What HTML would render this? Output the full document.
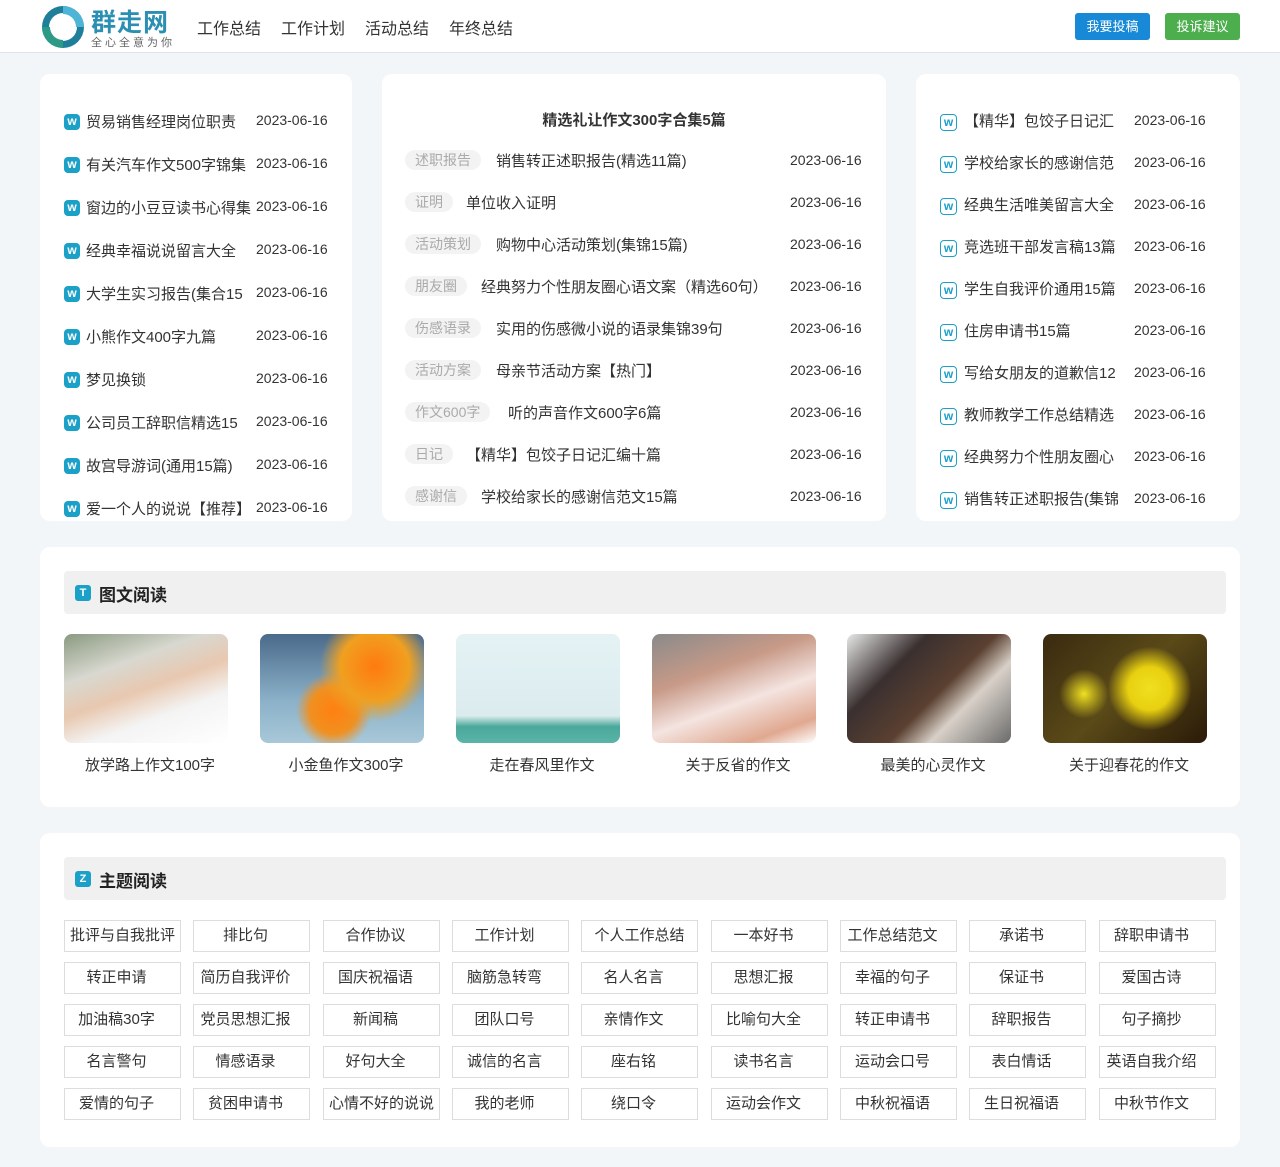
<!DOCTYPE html>
<html><head><meta charset="utf-8"><style>
*{margin:0;padding:0;box-sizing:border-box}
body{width:1280px;height:1167px;background:#f3f6f8;font-family:"Liberation Sans","Noto Sans CJK SC",sans-serif;color:#333;position:relative;overflow:hidden;font-size:14px}
.a{position:absolute;white-space:nowrap}
.hdr{position:absolute;left:0;top:0;width:1280px;height:53px;background:#fff;border-bottom:1px solid #dde3e8}
.card{position:absolute;background:#fff;border-radius:10px}
.wi{position:absolute;width:16px;height:16px;border-radius:4px;background:#1ba0c8;color:#fff;font-size:12px;font-weight:bold;line-height:15px;text-align:center}
.wo{position:absolute;width:17px;height:17px;border-radius:4px;border:1.5px solid #1ba0c8;color:#1ba0c8;font-size:12px;font-weight:bold;line-height:14px;text-align:center}
.d{color:#333;font-size:14px}
.tag{position:absolute;height:20px;line-height:20px;padding:0 10px;background:#f3f3f3;border-radius:10px;color:#aaa;font-size:14px}
.bar{position:absolute;left:64px;width:1162px;height:43px;background:#f0f0f0;border-radius:4px}
.bi{position:absolute;left:11px;top:14px;width:16px;height:16px;background:#1ba0c8;border-radius:3px;color:#fff;font-size:11px;font-weight:bold;line-height:16px;text-align:center}
.bt{position:absolute;left:35px;top:10px;font-size:17px;font-weight:bold;color:#222}
.img{position:absolute;top:634px;width:164px;height:109px;border-radius:8px;overflow:hidden}
.cap{position:absolute;top:754px;width:196px;text-align:center;font-size:15px;color:#333}
.t{position:absolute;width:117px;height:32px;border:1px solid #ddd;line-height:30px;text-align:center;font-size:15px;color:#333;white-space:nowrap;overflow:hidden;padding-right:12px}
</style></head><body>
<div class="hdr">
 <svg class="a" style="left:40px;top:4px" width="46" height="46" viewBox="0 0 46 46"><circle cx="23" cy="23" r="21" fill="#1f7f9a"/><circle cx="23" cy="23" r="14" fill="#fff"/><path d="M23 2 A21 21 0 0 1 44 23 L36 23 A13 13 0 0 0 23 10Z" fill="#4fb5d6"/><path d="M2 23 A21 21 0 0 0 23 44 L23 36 A13 13 0 0 1 10 23Z" fill="#2d9a86"/><circle cx="23" cy="23" r="9" fill="#fff"/></svg>
 <div class="a" style="left:91px;top:3px;font-size:25px;color:#2a8fb3;font-weight:bold;letter-spacing:1px">群走网</div>
 <div class="a" style="left:91px;top:34px;font-size:11px;color:#666;letter-spacing:3px">全心全意为你</div>
 <div class="a" style="left:197px;top:15px;font-size:16px;color:#333">工作总结</div>
 <div class="a" style="left:281px;top:15px;font-size:16px;color:#333">工作计划</div>
 <div class="a" style="left:365px;top:15px;font-size:16px;color:#333">活动总结</div>
 <div class="a" style="left:449px;top:15px;font-size:16px;color:#333">年终总结</div>
 <div class="a" style="left:1075px;top:13px;width:75px;height:27px;background:#1789d6;border-radius:3px;color:#fff;font-size:13px;line-height:27px;text-align:center">我要投稿</div>
 <div class="a" style="left:1165px;top:13px;width:75px;height:27px;background:#4cae4c;border-radius:3px;color:#fff;font-size:13px;line-height:27px;text-align:center">投诉建议</div>
</div>

<div class="card" style="left:40px;top:74px;width:312px;height:447px;overflow:hidden">
 <div class="wi" style="left:24px;top:40px">w</div><div class="a" style="left:46px;top:37px;font-size:15px">贸易销售经理岗位职责</div><div class="a d" style="left:216px;top:38px">2023-06-16</div>
 <div class="wi" style="left:24px;top:83px">w</div><div class="a" style="left:46px;top:80px;font-size:15px">有关汽车作文500字锦集</div><div class="a d" style="left:216px;top:81px">2023-06-16</div>
 <div class="wi" style="left:24px;top:126px">w</div><div class="a" style="left:46px;top:123px;font-size:15px">窗边的小豆豆读书心得集</div><div class="a d" style="left:216px;top:124px">2023-06-16</div>
 <div class="wi" style="left:24px;top:169px">w</div><div class="a" style="left:46px;top:166px;font-size:15px">经典幸福说说留言大全</div><div class="a d" style="left:216px;top:167px">2023-06-16</div>
 <div class="wi" style="left:24px;top:212px">w</div><div class="a" style="left:46px;top:209px;font-size:15px">大学生实习报告(集合15</div><div class="a d" style="left:216px;top:210px">2023-06-16</div>
 <div class="wi" style="left:24px;top:255px">w</div><div class="a" style="left:46px;top:252px;font-size:15px">小熊作文400字九篇</div><div class="a d" style="left:216px;top:253px">2023-06-16</div>
 <div class="wi" style="left:24px;top:298px">w</div><div class="a" style="left:46px;top:295px;font-size:15px">梦见换锁</div><div class="a d" style="left:216px;top:296px">2023-06-16</div>
 <div class="wi" style="left:24px;top:341px">w</div><div class="a" style="left:46px;top:338px;font-size:15px">公司员工辞职信精选15</div><div class="a d" style="left:216px;top:339px">2023-06-16</div>
 <div class="wi" style="left:24px;top:384px">w</div><div class="a" style="left:46px;top:381px;font-size:15px">故宫导游词(通用15篇)</div><div class="a d" style="left:216px;top:382px">2023-06-16</div>
 <div class="wi" style="left:24px;top:427px">w</div><div class="a" style="left:46px;top:424px;font-size:15px">爱一个人的说说【推荐】</div><div class="a d" style="left:216px;top:425px">2023-06-16</div>
</div>

<div class="card" style="left:382px;top:74px;width:504px;height:447px">
 <div class="a" style="left:0;width:504px;text-align:center;top:35px;font-size:15px;font-weight:bold">精选礼让作文300字合集5篇</div>
 <div class="tag" style="left:23px;top:76px">述职报告</div><div class="a" style="left:114px;top:76px;font-size:15px">销售转正述职报告(精选11篇)</div><div class="a d" style="left:408px;top:78px">2023-06-16</div>
 <div class="tag" style="left:23px;top:118px">证明</div><div class="a" style="left:84px;top:118px;font-size:15px">单位收入证明</div><div class="a d" style="left:408px;top:120px">2023-06-16</div>
 <div class="tag" style="left:23px;top:160px">活动策划</div><div class="a" style="left:114px;top:160px;font-size:15px">购物中心活动策划(集锦15篇)</div><div class="a d" style="left:408px;top:162px">2023-06-16</div>
 <div class="tag" style="left:23px;top:202px">朋友圈</div><div class="a" style="left:99px;top:202px;font-size:15px">经典努力个性朋友圈心语文案（精选60句）</div><div class="a d" style="left:408px;top:204px">2023-06-16</div>
 <div class="tag" style="left:23px;top:244px">伤感语录</div><div class="a" style="left:114px;top:244px;font-size:15px">实用的伤感微小说的语录集锦39句</div><div class="a d" style="left:408px;top:246px">2023-06-16</div>
 <div class="tag" style="left:23px;top:286px">活动方案</div><div class="a" style="left:114px;top:286px;font-size:15px">母亲节活动方案【热门】</div><div class="a d" style="left:408px;top:288px">2023-06-16</div>
 <div class="tag" style="left:23px;top:328px">作文600字</div><div class="a" style="left:126px;top:328px;font-size:15px">听的声音作文600字6篇</div><div class="a d" style="left:408px;top:330px">2023-06-16</div>
 <div class="tag" style="left:23px;top:370px">日记</div><div class="a" style="left:84px;top:370px;font-size:15px">【精华】包饺子日记汇编十篇</div><div class="a d" style="left:408px;top:372px">2023-06-16</div>
 <div class="tag" style="left:23px;top:412px">感谢信</div><div class="a" style="left:99px;top:412px;font-size:15px">学校给家长的感谢信范文15篇</div><div class="a d" style="left:408px;top:414px">2023-06-16</div>
</div>

<div class="card" style="left:916px;top:74px;width:324px;height:447px">
 <div class="wo" style="left:24px;top:40px">w</div><div class="a" style="left:48px;top:36px;font-size:15px">【精华】包饺子日记汇</div><div class="a d" style="left:218px;top:38px">2023-06-16</div>
 <div class="wo" style="left:24px;top:82px">w</div><div class="a" style="left:48px;top:78px;font-size:15px">学校给家长的感谢信范</div><div class="a d" style="left:218px;top:80px">2023-06-16</div>
 <div class="wo" style="left:24px;top:124px">w</div><div class="a" style="left:48px;top:120px;font-size:15px">经典生活唯美留言大全</div><div class="a d" style="left:218px;top:122px">2023-06-16</div>
 <div class="wo" style="left:24px;top:166px">w</div><div class="a" style="left:48px;top:162px;font-size:15px">竞选班干部发言稿13篇</div><div class="a d" style="left:218px;top:164px">2023-06-16</div>
 <div class="wo" style="left:24px;top:208px">w</div><div class="a" style="left:48px;top:204px;font-size:15px">学生自我评价通用15篇</div><div class="a d" style="left:218px;top:206px">2023-06-16</div>
 <div class="wo" style="left:24px;top:250px">w</div><div class="a" style="left:48px;top:246px;font-size:15px">住房申请书15篇</div><div class="a d" style="left:218px;top:248px">2023-06-16</div>
 <div class="wo" style="left:24px;top:292px">w</div><div class="a" style="left:48px;top:288px;font-size:15px">写给女朋友的道歉信12</div><div class="a d" style="left:218px;top:290px">2023-06-16</div>
 <div class="wo" style="left:24px;top:334px">w</div><div class="a" style="left:48px;top:330px;font-size:15px">教师教学工作总结精选</div><div class="a d" style="left:218px;top:332px">2023-06-16</div>
 <div class="wo" style="left:24px;top:376px">w</div><div class="a" style="left:48px;top:372px;font-size:15px">经典努力个性朋友圈心</div><div class="a d" style="left:218px;top:374px">2023-06-16</div>
 <div class="wo" style="left:24px;top:418px">w</div><div class="a" style="left:48px;top:414px;font-size:15px">销售转正述职报告(集锦</div><div class="a d" style="left:218px;top:416px">2023-06-16</div>
</div>

<div class="card" style="left:40px;top:547px;width:1200px;height:260px"></div>
<div class="bar" style="top:571px"><div class="bi">T</div><div class="bt">图文阅读</div></div>
<div class="img" style="left:64px;background:linear-gradient(160deg,#8a9a80 0%,#d8d8d0 30%,#e8c8b0 50%,#f4f4f4 70%,#fff 100%)"></div>
<div class="img" style="left:260px;background:radial-gradient(circle at 70% 30%,#ff7a10 0,#f0a020 25%,transparent 40%),radial-gradient(circle at 45% 70%,#ff8010 0,#f09020 20%,transparent 32%),linear-gradient(180deg,#4a6a8a,#8ab0c8 60%,#a8c8d8)"></div>
<div class="img" style="left:456px;background:linear-gradient(180deg,#e4f2f4 0%,#dcecee 75%,#4aa89a 85%,#5ab4a8 100%)"></div>
<div class="img" style="left:652px;background:linear-gradient(160deg,#8a8a8a 0%,#c89a88 35%,#f4e4e0 60%,#e0a890 85%,#fff 100%)"></div>
<div class="img" style="left:847px;background:linear-gradient(135deg,#e8e8e8 0%,#3a3030 30%,#5a4030 55%,#d8d0c8 70%,#6a6a6a 100%)"></div>
<div class="img" style="left:1043px;background:radial-gradient(circle at 65% 50%,#f0e020 0,#e8d010 18%,transparent 35%),radial-gradient(circle at 25% 55%,#f0e020 0,transparent 18%),linear-gradient(135deg,#3a2a10,#5a4a18 50%,#2a1a08)"></div>
<div class="cap" style="left:52px">放学路上作文100字</div>
<div class="cap" style="left:248px">小金鱼作文300字</div>
<div class="cap" style="left:444px">走在春风里作文</div>
<div class="cap" style="left:640px">关于反省的作文</div>
<div class="cap" style="left:835px">最美的心灵作文</div>
<div class="cap" style="left:1031px">关于迎春花的作文</div>

<div class="card" style="left:40px;top:833px;width:1200px;height:314px"></div>
<div class="bar" style="top:857px"><div class="bi">Z</div><div class="bt">主题阅读</div></div>

<div class="t" style="left:64px;top:920px;padding:0">批评与自我批评</div><div class="t" style="left:193px;top:920px">排比句</div><div class="t" style="left:323px;top:920px">合作协议</div><div class="t" style="left:452px;top:920px">工作计划</div><div class="t" style="left:581px;top:920px;padding:0">个人工作总结</div><div class="t" style="left:711px;top:920px">一本好书</div><div class="t" style="left:840px;top:920px">工作总结范文</div><div class="t" style="left:969px;top:920px">承诺书</div><div class="t" style="left:1099px;top:920px">辞职申请书</div>
<div class="t" style="left:64px;top:962px">转正申请</div><div class="t" style="left:193px;top:962px">简历自我评价</div><div class="t" style="left:323px;top:962px">国庆祝福语</div><div class="t" style="left:452px;top:962px">脑筋急转弯</div><div class="t" style="left:581px;top:962px">名人名言</div><div class="t" style="left:711px;top:962px">思想汇报</div><div class="t" style="left:840px;top:962px">幸福的句子</div><div class="t" style="left:969px;top:962px">保证书</div><div class="t" style="left:1099px;top:962px">爱国古诗</div>
<div class="t" style="left:64px;top:1004px">加油稿30字</div><div class="t" style="left:193px;top:1004px">党员思想汇报</div><div class="t" style="left:323px;top:1004px">新闻稿</div><div class="t" style="left:452px;top:1004px">团队口号</div><div class="t" style="left:581px;top:1004px">亲情作文</div><div class="t" style="left:711px;top:1004px">比喻句大全</div><div class="t" style="left:840px;top:1004px">转正申请书</div><div class="t" style="left:969px;top:1004px">辞职报告</div><div class="t" style="left:1099px;top:1004px">句子摘抄</div>
<div class="t" style="left:64px;top:1046px">名言警句</div><div class="t" style="left:193px;top:1046px">情感语录</div><div class="t" style="left:323px;top:1046px">好句大全</div><div class="t" style="left:452px;top:1046px">诚信的名言</div><div class="t" style="left:581px;top:1046px">座右铭</div><div class="t" style="left:711px;top:1046px">读书名言</div><div class="t" style="left:840px;top:1046px">运动会口号</div><div class="t" style="left:969px;top:1046px">表白情话</div><div class="t" style="left:1099px;top:1046px">英语自我介绍</div>
<div class="t" style="left:64px;top:1088px">爱情的句子</div><div class="t" style="left:193px;top:1088px">贫困申请书</div><div class="t" style="left:323px;top:1088px;padding:0">心情不好的说说</div><div class="t" style="left:452px;top:1088px">我的老师</div><div class="t" style="left:581px;top:1088px">绕口令</div><div class="t" style="left:711px;top:1088px">运动会作文</div><div class="t" style="left:840px;top:1088px">中秋祝福语</div><div class="t" style="left:969px;top:1088px">生日祝福语</div><div class="t" style="left:1099px;top:1088px">中秋节作文</div>
</body></html>
